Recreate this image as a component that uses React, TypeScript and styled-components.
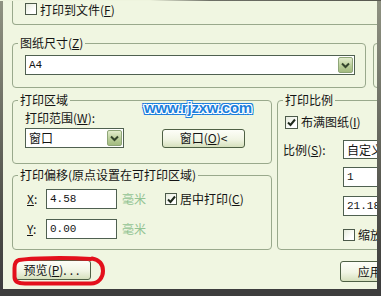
import { ReactNode } from 'react'
import styled, { createGlobalStyle } from 'styled-components'

const GlobalStyle = createGlobalStyle`
  html, body {
    margin: 0;
    padding: 0;
  }
  body {
    width: 381px;
    height: 296px;
    overflow: hidden;
    background: #3d3d3d;
    font-family: "Noto Sans CJK SC", "Liberation Sans", sans-serif;
    font-size: 12px;
    color: #141414;
  }
`

const S = {
  Screen: styled.div`
    width: 381px;
    height: 296px;
    display: flex;
    flex-direction: column;
    background: #3d3d3d;
  `,
  TopEdge: styled.div`
    height: 1px;
    flex-shrink: 0;
    background: linear-gradient(
      to right,
      #eef4de 0,
      #eef4de 150px,
      #6e7066 210px,
      #57584f 100%
    );
  `,
  Middle: styled.div`
    flex: 1;
    display: flex;
    min-height: 0;
  `,
  SideEdge: styled.div<{ $w: number }>`
    width: ${({ $w }) => $w}px;
    flex-shrink: 0;
    background: linear-gradient(to bottom, #8f9282, #4a4a45 80%, #3d3d3d);
  `,
  Dialog: styled.div`
    position: relative;
    flex: 1;
    overflow: hidden;
    background: #f0f6e1;
    padding-left: 9px;
  `,
  Content: styled.div`
    width: 460px;
    display: flex;
    flex-direction: column;
  `,
  BottomEdge: styled.div`
    height: 7px;
    flex-shrink: 0;
    background: #3d3d3d;
  `,
  TopGroup: styled.div`
    width: 450px;
    height: 23px;
    border: 1px solid #99a98c;
    border-top: none;
    border-radius: 0 0 4px 4px;
    padding-left: 12px;
    display: flex;
    align-items: flex-start;
  `,
  TopCaption: styled.span`
    line-height: 17px;
    white-space: nowrap;
  `,
  Row: styled.div<{ $gap?: number; $mt?: number }>`
    display: flex;
    align-items: stretch;
    gap: ${({ $gap = 0 }) => $gap}px;
    margin-top: ${({ $mt = 0 }) => $mt}px;
  `,
  Column: styled.div<{ $w: number }>`
    width: ${({ $w }) => $w}px;
    flex-shrink: 0;
    display: flex;
    flex-direction: column;
  `,
  Group: styled.fieldset<{ $w: number; $mt?: number }>`
    width: ${({ $w }) => $w}px;
    flex-shrink: 0;
    box-sizing: border-box;
    min-width: 0;
    margin: ${({ $mt = 0 }) => $mt}px 0 0 0;
    padding: 0;
    border: 1px solid #99a98c;
    border-radius: 4px;
  `,
  Legend: styled.legend`
    margin-left: 5px;
    padding: 0 2px;
    line-height: 14px;
    font-size: 12px;
    white-space: nowrap;
  `,
  Body: styled.div<{ $pad: string }>`
    padding: ${({ $pad }) => $pad};
    display: flex;
    flex-direction: column;
  `,
  Line: styled.div<{ $mt?: number; $ml?: number }>`
    display: flex;
    align-items: center;
    margin-top: ${({ $mt = 0 }) => $mt}px;
    margin-left: ${({ $ml = 0 }) => $ml}px;
    white-space: nowrap;
  `,
  Text: styled.span<{ $w?: number; $ml?: number; $muted?: boolean }>`
    line-height: 14px;
    white-space: nowrap;
    flex-shrink: 0;
    width: ${({ $w }) => ($w ? `${$w}px` : 'auto')};
    margin-left: ${({ $ml = 0 }) => $ml}px;
    color: ${({ $muted }) => ($muted ? '#93c493' : 'inherit')};
  `,
  Box: styled.span<{ $size: number; $ml?: number; $mt?: number }>`
    width: ${({ $size }) => $size}px;
    height: ${({ $size }) => $size}px;
    box-sizing: border-box;
    flex-shrink: 0;
    margin: ${({ $mt = 0 }) => $mt}px 3px 0 ${({ $ml = 0 }) => $ml}px;
    border: 1px solid #4c5a4a;
    background: linear-gradient(135deg, #e6ebdc, #ffffff 70%);
    display: flex;
    align-items: center;
    justify-content: center;
  `,
  Field: styled.div<{ $w: number; $h: number; $ml?: number; $mt?: number }>`
    width: ${({ $w }) => $w}px;
    height: ${({ $h }) => $h}px;
    box-sizing: border-box;
    flex-shrink: 0;
    margin-left: ${({ $ml = 0 }) => $ml}px;
    margin-top: ${({ $mt = 0 }) => $mt}px;
    border: 1px solid #4f6050;
    background: #ffffff;
    display: flex;
    align-items: center;
    padding: 1px 1px 1px 3px;
    white-space: nowrap;
    overflow: hidden;
  `,
  Value: styled.span<{ $mono?: boolean }>`
    flex: 1;
    font-family: ${({ $mono }) =>
      $mono
        ? '"Liberation Mono", "DejaVu Sans Mono", monospace'
        : '"Noto Sans CJK SC", "Liberation Sans", sans-serif'};
    font-size: ${({ $mono }) => ($mono ? 11 : 12)}px;
    line-height: 14px;
  `,
  DropButton: styled.span`
    width: 15px;
    align-self: stretch;
    box-sizing: border-box;
    border: 1px solid #8fa678;
    border-radius: 2px;
    background: linear-gradient(to bottom, #e3edcd, #b7cc96 60%, #a3bb80);
    display: flex;
    align-items: center;
    justify-content: center;
  `,
  Button: styled.div<{ $w: number; $h: number; $ml?: number; $mt?: number }>`
    width: ${({ $w }) => $w}px;
    height: ${({ $h }) => $h}px;
    box-sizing: border-box;
    flex-shrink: 0;
    margin-left: ${({ $ml = 0 }) => $ml}px;
    margin-top: ${({ $mt = 0 }) => $mt}px;
    border: 1px solid #4e6044;
    border-radius: 3px;
    background: linear-gradient(to bottom, #fdfef8 0%, #f1f5e4 55%, #d6e0bd 100%);
    display: flex;
    align-items: center;
    justify-content: center;
    white-space: nowrap;
    line-height: 14px;
  `,
  Dots: styled.span`
    letter-spacing: 3px;
  `,
  Marked: styled.div`
    position: relative;
    margin-left: 3px;
  `,
  Circle: styled.svg`
    position: absolute;
    left: -4px;
    top: -5px;
    pointer-events: none;
  `,
  Watermark: styled.div`
    position: absolute;
    left: 141px;
    top: 98px;
    font-family: "Liberation Sans", Arial, sans-serif;
    font-weight: 700;
    font-size: 15px;
    letter-spacing: -0.2px;
    color: #1c7fdc;
    text-shadow:
      1px 0 0 #fff, -1px 0 0 #fff, 0 1px 0 #fff, 0 -1px 0 #fff,
      1px 1px 0 #fff, -1px -1px 0 #fff, 1px -1px 0 #fff, -1px 1px 0 #fff,
      2px 0 0 #1c7fdc, -2px 0 0 #1c7fdc, 0 2px 0 #1c7fdc, 0 -2px 0 #1c7fdc,
      2px 2px 0 #1c7fdc, -2px -2px 0 #1c7fdc, 2px -2px 0 #1c7fdc,
      -2px 2px 0 #1c7fdc;
    pointer-events: none;
  `,
}

const Key = ({ k }: { k: string }) => (
  <>
    (<u>{k}</u>)
  </>
)

const Check = ({
  checked,
  size = 13,
  ml,
  mt,
}: {
  checked?: boolean
  size?: number
  ml?: number
  mt?: number
}) => (
  <S.Box $size={size} $ml={ml} $mt={mt}>
    {checked && (
      <svg width="9" height="9" viewBox="0 0 9 9">
        <path d="M1 4.5 L3.5 7 L8 1.5" fill="none" stroke="#1f2a1c" strokeWidth="2" />
      </svg>
    )}
  </S.Box>
)

const Combo = ({
  w,
  h,
  ml,
  children,
}: {
  w: number
  h: number
  ml?: number
  children: ReactNode
}) => (
  <S.Field $w={w} $h={h} $ml={ml}>
    {children}
    <S.DropButton>
      <svg width="9" height="7" viewBox="0 0 9 7">
        <path d="M1 1.5 L4.5 5 L8 1.5" fill="none" stroke="#34452c" strokeWidth="2" />
      </svg>
    </S.DropButton>
  </S.Field>
)

export default function App() {
  return (
    <>
      <GlobalStyle />
      <S.Screen>
        <S.TopEdge />
        <S.Middle>
          <S.SideEdge $w={3} />
          <S.Dialog>
            <S.Content>
              <S.TopGroup>
                <Check size={12} mt={2} />
                <S.TopCaption>
                  打印到文件(<u>F</u>)
                </S.TopCaption>
              </S.TopGroup>

              <S.Row $gap={7} $mt={11}>
                <S.Group $w={354}>
                  <S.Legend>
                    图纸尺寸<Key k="Z" />
                  </S.Legend>
                  <S.Body $pad="5px 9px 12px 12px">
                    <Combo w={330} h={20}>
                      <S.Value $mono>A4</S.Value>
                    </Combo>
                  </S.Body>
                </S.Group>
                <S.Group $w={100} $mt={7} />
              </S.Row>

              <S.Row $gap={5} $mt={5}>
                <S.Column $w={260}>
                  <S.Group $w={260}>
                    <S.Legend>打印区域</S.Legend>
                    <S.Body $pad="4px 0 15px 12px">
                      <S.Text>
                        打印范围<Key k="W" />:
                      </S.Text>
                      <S.Line $mt={3}>
                        <Combo w={99} h={20}>
                          <S.Value>窗口</S.Value>
                        </Combo>
                        <S.Button $w={83} $h={19} $ml={38}>
                          窗口<Key k="O" />&lt;
                        </S.Button>
                      </S.Line>
                    </S.Body>
                  </S.Group>

                  <S.Group $w={260} $mt={4}>
                    <S.Legend>打印偏移(原点设置在可打印区域)</S.Legend>
                    <S.Body $pad="7px 0 10px 14px">
                      <S.Line>
                        <S.Text $w={19}>
                          <u>X</u>:
                        </S.Text>
                        <S.Field $w={71} $h={20}>
                          <S.Value $mono>4.58</S.Value>
                        </S.Field>
                        <S.Text $ml={5} $muted>
                          毫米
                        </S.Text>
                        <Check size={12} ml={19} checked />
                        <S.Text>
                          居中打印<Key k="C" />
                        </S.Text>
                      </S.Line>
                      <S.Line $mt={10}>
                        <S.Text $w={19}>
                          <u>Y</u>:
                        </S.Text>
                        <S.Field $w={71} $h={20}>
                          <S.Value $mono>0.00</S.Value>
                        </S.Field>
                        <S.Text $ml={5} $muted>
                          毫米
                        </S.Text>
                      </S.Line>
                    </S.Body>
                  </S.Group>
                </S.Column>

                <S.Group $w={130}>
                  <S.Legend>打印比例</S.Legend>
                  <S.Body $pad="8px 0 0 5px">
                    <S.Line $ml={2}>
                      <Check checked />
                      <S.Text>
                        布满图纸<Key k="I" />
                      </S.Text>
                    </S.Line>
                    <S.Line $mt={11}>
                      <S.Text $w={60}>
                        比例<Key k="S" />:
                      </S.Text>
                      <Combo w={95} h={19}>
                        <S.Value>自定义</S.Value>
                      </Combo>
                    </S.Line>
                    <S.Field $w={80} $h={20} $ml={60} $mt={8}>
                      <S.Value $mono>1</S.Value>
                    </S.Field>
                    <S.Field $w={80} $h={20} $ml={60} $mt={9}>
                      <S.Value $mono>21.18</S.Value>
                    </S.Field>
                    <S.Line $mt={12} $ml={60}>
                      <Check size={12} />
                      <S.Text>
                        缩放线宽<Key k="L" />
                      </S.Text>
                    </S.Line>
                  </S.Body>
                </S.Group>
              </S.Row>

              <S.Row $mt={10} $gap={249}>
                <S.Marked>
                  <S.Button $w={76} $h={20}>
                    预览<Key k="P" />
                    <S.Dots>...</S.Dots>
                  </S.Button>
                  <S.Circle width="96" height="32" viewBox="0 0 96 32">
                    <path
                      d="M80 4 C55 2.5 20 3 8 5 C4 6 3.5 9 3.5 13 L3.5 22 C3.5 26 7 28.5 14 28.5 L80 28.5 C88 28.5 92 22 92 16 C92 10 89 5 81 3.5"
                      fill="none"
                      stroke="#e3101c"
                      strokeWidth="4"
                      strokeLinecap="round"
                    />
                  </S.Circle>
                </S.Marked>
                <S.Button $w={75} $h={21} $mt={1}>
                  应用<Key k="A" />
                </S.Button>
              </S.Row>
            </S.Content>
            <S.Watermark>www.rjzxw.com</S.Watermark>
          </S.Dialog>
          <S.SideEdge $w={4} />
        </S.Middle>
        <S.BottomEdge />
      </S.Screen>
    </>
  )
}
